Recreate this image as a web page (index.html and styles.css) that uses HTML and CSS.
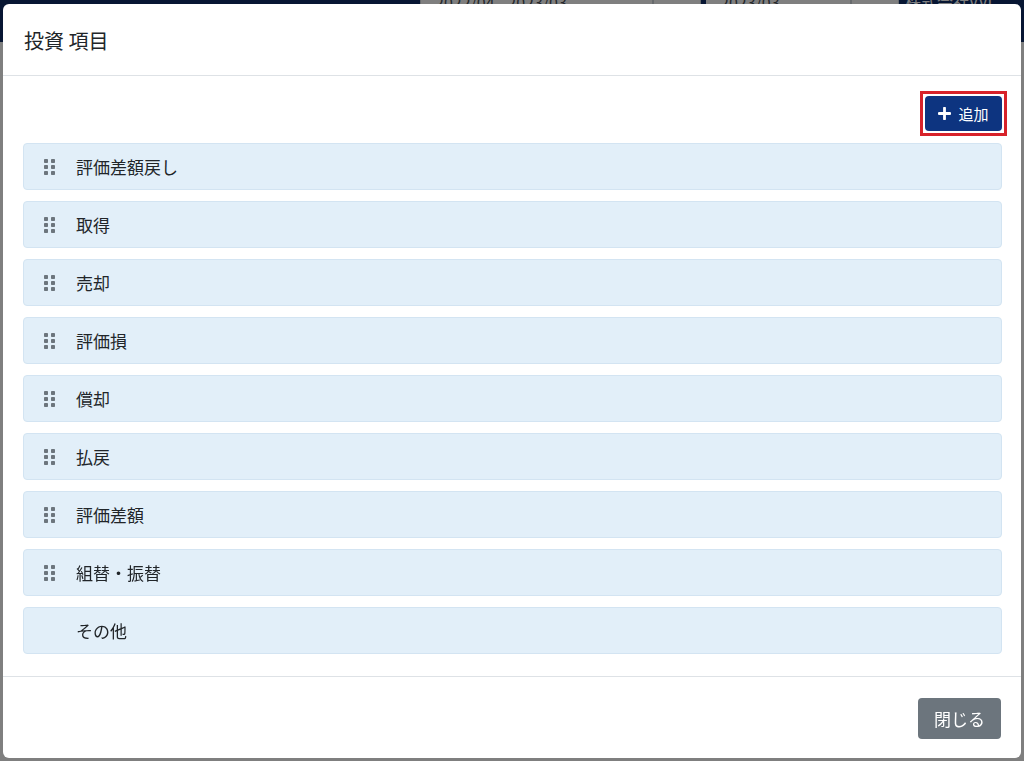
FILE: index.html
```html
<!DOCTYPE html>
<html lang="ja">
<head>
<meta charset="UTF-8" />
<meta name="viewport" content="width=device-width, initial-scale=1.0" />
<title>投資 項目</title>
<link rel="stylesheet" href="styles.css">
</head>
<body>

<!-- 背景の画面 -->
<div class="app-bar">
  <div class="app-bar-spacer"></div>
  <div class="period-box">2022/04 - 2023/03</div>
  <div class="period-btn"></div>
  <div class="month-box">2023/03</div>
  <div class="period-btn"></div>
  <div class="company">株式会社VVI</div>
</div>
<div class="backdrop"></div>

<!-- モーダル -->
<div class="modal">
  <div class="modal-header">
    <h5 class="modal-title">投資 項目</h5>
  </div>

  <div class="modal-body">
    <div class="toolbar">
      <span class="highlight">
        <button class="btn-add" type="button">
          <svg width="13" height="13" viewBox="0 0 12 12"><path d="M6 1v10M1 6h10" stroke="#fff" stroke-width="2.6" stroke-linecap="round"/></svg>
          追加
        </button>
      </span>
    </div>

    <ul class="item-list" id="itemList"></ul>
  </div>

  <div class="modal-footer">
    <button class="btn-close" type="button">閉じる</button>
  </div>
</div>

<script>
  const items = ['評価差額戻し', '取得', '売却', '評価損', '償却', '払戻', '評価差額', '組替・振替'];
  const handle = '<svg class="handle" width="11" height="16" viewBox="0 0 11 16">' +
    '<rect x="0" y="0" width="4" height="4" rx="0.8"/><rect x="7" y="0" width="4" height="4" rx="0.8"/>' +
    '<rect x="0" y="6" width="4" height="4" rx="0.8"/><rect x="7" y="6" width="4" height="4" rx="0.8"/>' +
    '<rect x="0" y="12" width="4" height="4" rx="0.8"/><rect x="7" y="12" width="4" height="4" rx="0.8"/></svg>';

  const list = document.getElementById('itemList');
  items.forEach(name => {
    const li = document.createElement('li');
    li.className = 'item';
    li.innerHTML = handle + '<span>' + name + '</span>';
    list.appendChild(li);
  });

  // 「その他」は固定なので並べ替え不可
  const other = document.createElement('li');
  other.className = 'item fixed';
  other.innerHTML = '<span class="handle-space"></span><span>その他</span>';
  list.appendChild(other);
</script>

</body>
</html>
```

FILE: styles.css
```css
body {
  margin: 0;
  padding: 0;
  font-family: "Noto Sans CJK JP", "Noto Sans", "Liberation Sans", sans-serif;
  background-color: #fff;
  color: #212529;
  height: 761px;
  overflow: hidden;
}

/* 背景のヘッダー */
.app-bar {
  height: 42px;
  background-color: #0f2c66;
  display: flex;
  align-items: flex-start;
  font-size: 16px;
}
.app-bar-spacer {
  flex: 1;
}
.period-box,
.month-box,
.period-btn,
.company {
  margin-top: -14px;
  height: 30px;
  line-height: 30px;
  box-sizing: border-box;
}
.period-box,
.month-box {
  background-color: #fff;
  color: #495057;
  padding: 0 14px;
  border: 1px solid #ced4da;
}
.period-box {
  width: 233px;
}
.month-box {
  width: 150px;
  border-left: 5px solid #0f2c66;
}
.period-btn {
  width: 48px;
  background-color: #fff;
  border: 1px solid #ced4da;
}
.company {
  width: 125px;
  color: #fff;
  padding-left: 6px;
}

/* 背景を暗くする */
.backdrop {
  position: fixed;
  inset: 0;
  background-color: rgba(0, 0, 0, 0.5);
}

/* モーダル本体 */
.modal {
  position: fixed;
  top: 4px;
  left: 3px;
  right: 3px;
  bottom: 3px;
  background-color: #fff;
  border-radius: 6px;
  display: flex;
  flex-direction: column;
}
.modal-header {
  padding: 22px 21px 19px;
  border-bottom: 1px solid #dee2e6;
}
.modal-title {
  margin: 0;
  font-size: 20px;
  font-weight: 400;
  line-height: 30px;
}
.modal-body {
  flex: 1;
  padding: 15px 14px 20px 20px;
}
.toolbar {
  display: flex;
  justify-content: flex-end;
  margin-bottom: 7px;
}
/* 赤枠（強調表示） */
.highlight {
  display: block;
  padding: 2px;
  border: 3px solid #d7222a;
}
.btn-add {
  display: flex;
  align-items: center;
  gap: 7px;
  height: 35px;
  width: 77px;
  justify-content: center;
  background-color: #0d3480;
  color: #fff;
  border: none;
  border-radius: 4px;
  font-family: inherit;
  font-size: 15px;
  cursor: pointer;
}

/* 項目リスト */
.item-list {
  list-style: none;
  margin: 0 5px 0 0;
  padding: 0;
  display: flex;
  flex-direction: column;
  gap: 11px;
}
.item {
  height: 45px;
  display: flex;
  align-items: center;
  gap: 21px;
  padding-left: 20px;
  background-color: #e2eff9;
  border: 1px solid #d3e4f2;
  border-radius: 4px;
  font-size: 17px;
}
.handle {
  fill: #6c757d;
  flex-shrink: 0;
}
.handle-space {
  width: 11px;
}

/* フッター */
.modal-footer {
  display: flex;
  justify-content: flex-end;
  padding: 21px 20px 19px;
  border-top: 1px solid #dee2e6;
}
.btn-close {
  height: 41px;
  width: 83px;
  background-color: #6c757d;
  color: #fff;
  border: none;
  border-radius: 4px;
  font-family: inherit;
  font-size: 17px;
  cursor: pointer;
}
```
